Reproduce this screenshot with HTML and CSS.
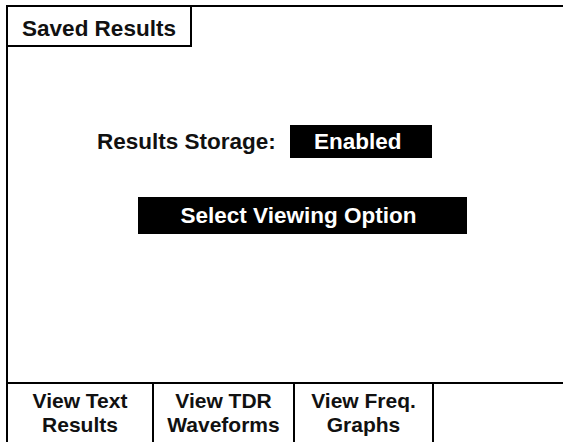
FILE: index.html
```html
<!DOCTYPE html>
<html lang="en">
<head>
  <meta charset="UTF-8" />
  <title>Saved Results</title>
  <link rel="stylesheet" href="styles.css">
</head>
<body>

  <div class="screen">
    <!-- titlu -->
    <div class="title-tab">Saved Results</div>

    <div class="main">
      <div class="storage-row">
        <span class="storage-label">Results Storage:</span>
        <span class="storage-value">Enabled</span>
      </div>
      <div class="select-bar">Select Viewing Option</div>
    </div>

    <!-- taste soft -->
    <div class="softkeys">
      <div class="softkey">View Text<br>Results</div>
      <div class="softkey">View TDR<br>Waveforms</div>
      <div class="softkey">View Freq.<br>Graphs</div>
      <div class="softkey"></div>
    </div>
  </div>

</body>
</html>
```

FILE: styles.css
```css
* {
  margin: 0;
  padding: 0;
  box-sizing: border-box;
}

body {
  font-family: "Liberation Sans", Arial, Helvetica, sans-serif;
  font-weight: bold;
  background: #fff;
  color: #111;
  width: 563px;
  height: 442px;
  overflow: hidden;
}

.screen {
  margin: 5px 0 0 6px;
  height: 437px;
  border-top: 2px solid #000;
  border-left: 2px solid #000;
  display: flex;
  flex-direction: column;
}

.title-tab {
  width: 184px;
  height: 40px;
  border-right: 2px solid #000;
  border-bottom: 2px solid #000;
  font-size: 22.5px;
  line-height: 38px;
  padding-top: 3px;
  text-align: center;
}

.main {
  flex: 1;
  display: flex;
  flex-direction: column;
  align-items: flex-start;
  padding-top: 78px;
}

.storage-row {
  display: flex;
  align-items: center;
  gap: 14px;
  margin-left: 89px;
  font-size: 22.5px;
}

.storage-value {
  width: 142px;
  height: 33px;
  line-height: 33px;
  background: #000;
  color: #fff;
  text-align: center;
  padding-right: 6px;
}

.select-bar {
  margin-top: 39px;
  margin-left: 130px;
  width: 329px;
  height: 37px;
  line-height: 37px;
  background: #000;
  color: #fff;
  font-size: 22.5px;
  text-align: center;
  padding-right: 8px;
}

.softkeys {
  height: 60px;
  border-top: 2px solid #000;
  display: grid;
  grid-template-columns: 146px 141px 139px 1fr;
}

.softkey {
  border-right: 2px solid #000;
  font-size: 21px;
  line-height: 24px;
  text-align: center;
  padding-top: 5px;
}

.softkey:last-child {
  border-right: none;
}
```
